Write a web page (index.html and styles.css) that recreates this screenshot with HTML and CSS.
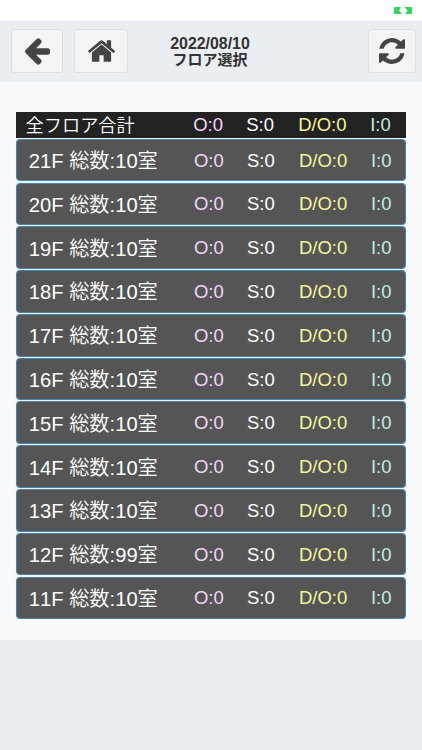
FILE: index.html
```html
<!DOCTYPE html>
<html lang="ja">
<head>
    <meta charset="UTF-8">
    <meta name="viewport" content="width=device-width, initial-scale=1.0">
    <title>フロア選択</title>
    <link rel="stylesheet" href="styles.css">
</head>
<body>

    <div class="status-bar">
        <svg class="battery" viewBox="0 0 18 7"><path d="M1 0h6L5 3.500 8 7H1Q0 7 0 6V1Q0 0 1 0zM10.500 0h6.500q1 0 1 1v5q0 1-1 1h-6L13.500 3.500z"/></svg>
    </div>

    <div class="header">
        <button class="btn btn-back">
            <svg viewBox="192 197 1472 1526"><path d="M1664 896v128q0 53-32.500 90.500t-84.500 37.500h-704l293 294q38 36 38 90t-38 90l-75 76q-37 37-90 37-52 0-91-37l-651-652q-37-37-37-90 0-52 37-91l651-650q38-38 91-38 52 0 90 38l75 74q38 38 38 91t-38 91l-293 293h704q52 0 84.500 37.500t32.500 90.500z"/></svg>
        </button>
        <button class="btn btn-home">
            <svg viewBox="88 253 1616 1283"><path d="M1472 992v480q0 26-19 45t-45 19h-384v-384h-256v384h-384q-26 0-45-19t-19-45v-480q0-1 .5-3t.5-3l575-474 575 474q1 2 1 6zm223-69l-62 74q-8 9-21 11h-3q-13 0-21-7l-692-577-692 577q-12 8-24 7-13-2-21-11l-62-74q-8-10-7-23.500t11-21.500l719-599q32-26 76-26t76 26l244 204v-195q0-14 9-23t23-9h192q14 0 23 9t9 23v408l219 182q10 8 11 21.500t-7 23.500z"/></svg>
        </button>
        <h1><span class="date">2022/08/10</span><br>フロア選択</h1>
        <button class="btn btn-refresh">
            <svg viewBox="128 128 1536 1536"><path d="M1639 1056q0 5-1 7-64 268-268 434.500t-478 166.500q-146 0-282.500-55t-243.500-157l-129 129q-19 19-45 19t-45-19-19-45v-448q0-26 19-45t45-19h448q26 0 45 19t19 45-19 45l-137 137q71 66 161 102t187 36q134 0 250-65t186-179q11-17 53-117 8-23 30-23h192q13 0 22.500 9.500t9.500 22.500zm25-800v448q0 26-19 45t-45 19h-448q-26 0-45-19t-19-45 19-45l138-138q-148-137-349-137-134 0-250 65t-186 179q-11 17-53 117-8 23-30 23h-199q-13 0-22.500-9.500t-9.500-22.500v-7q65-268 270-434.500t480-166.500q146 0 284 55.500t245 156.500l130-129q19-19 45-19t45 19 19 45z"/></svg>
        </button>
    </div>

    <div class="content">
        <div class="total">
            <span class="label">全フロア合計</span>
            <span class="occupied">O:0</span>
            <span>S:0</span>
            <span class="dayout">D/O:0</span>
            <span class="inspect">I:0</span>
        </div>
        <div class="floor-list" id="floorList"></div>
    </div>

    <script>
        const floors = [
            { name: "21F", rooms: 10 },
            { name: "20F", rooms: 10 },
            { name: "19F", rooms: 10 },
            { name: "18F", rooms: 10 },
            { name: "17F", rooms: 10 },
            { name: "16F", rooms: 10 },
            { name: "15F", rooms: 10 },
            { name: "14F", rooms: 10 },
            { name: "13F", rooms: 10 },
            { name: "12F", rooms: 99 },
            { name: "11F", rooms: 10 }
        ];

        const list = document.getElementById("floorList");
        floors.forEach(floor => {
            const row = document.createElement("div");
            row.classList.add("floor");
            row.innerHTML = `<span class="name">${floor.name} 総数:${floor.rooms}室</span><span class="occupied">O:0</span><span>S:0</span><span class="dayout">D/O:0</span><span class="inspect">I:0</span>`;
            list.appendChild(row);
        });
    </script>

</body>
</html>
```
FILE: styles.css
```css
* {
    box-sizing: border-box;
}

body {
    margin: 0;
    min-height: 750px;
    background: #eaedf2;
    font-family: "Liberation Sans", "Noto Sans CJK JP", sans-serif;
    font-kerning: none;
}

.status-bar {
    height: 21px;
    padding: 7px 10px 0 0;
    background: #ffffff;
    display: flex;
    justify-content: flex-end;
}

.battery {
    width: 18px;
    height: 7px;
    fill: #35d35f;
}

.header {
    height: 61px;
    padding: 8px 6px 0 11px;
    display: flex;
    align-items: flex-start;
}

.btn {
    height: 44px;
    padding: 0;
    border: 1px solid #dddfe1;
    border-radius: 3px;
    background: #f4f4f4;
    display: flex;
    align-items: center;
    justify-content: center;
}

.btn svg {
    display: block;
    fill: #444444;
}

.btn-back {
    width: 52px;
    margin-right: 11px;
}

.btn-back svg {
    width: 25px;
    height: 27px;
}

.btn-home {
    width: 54px;
}

.btn-home svg {
    width: 27px;
    height: 22px;
}

.btn-refresh {
    width: 48px;
}

.btn-refresh svg {
    width: 26px;
    height: 26px;
}

.header h1 {
    flex: 1;
    margin: 7px 0 0;
    padding-right: 76px;
    color: #333333;
    font-size: 15px;
    line-height: 16px;
    font-weight: bold;
    text-align: center;
}

.header .date {
    font-size: 15.9px;
}

.content {
    height: 558px;
    padding: 30px 15.6px 0;
    background: #f9fafc;
}

/* total row and floor rows share the same columns */
.total,
.floor {
    display: grid;
    grid-template-columns: 167.6px 53px 52px 72px 1fr;
    align-items: center;
    color: #ffffff;
    font-size: 18.5px;
    font-weight: 350;
    white-space: nowrap;
}

.total {
    height: 26px;
    padding-left: 10px;
    background: #222222;
}

.total .label {
    font-size: 18.2px;
    margin-top: -2px;
}

.floor-list {
    padding-top: 0.8px;
}

.floor {
    height: 42.6px;
    margin-bottom: 1.2px;
    padding: 1px 0 0 9.8px;
    border: 1px solid #4b83a9;
    border-radius: 4px;
    background: #555555;
    box-shadow: 0 0 1px #a5d3f2;
}

.floor .name {
    margin-top: -2px;
    padding-left: 2.4px;
    font-size: 20.2px;
}

.occupied {
    color: #f3d7f5;
}

.dayout {
    color: #f4f59b;
}

.inspect {
    color: #c3ebe0;
}
```
